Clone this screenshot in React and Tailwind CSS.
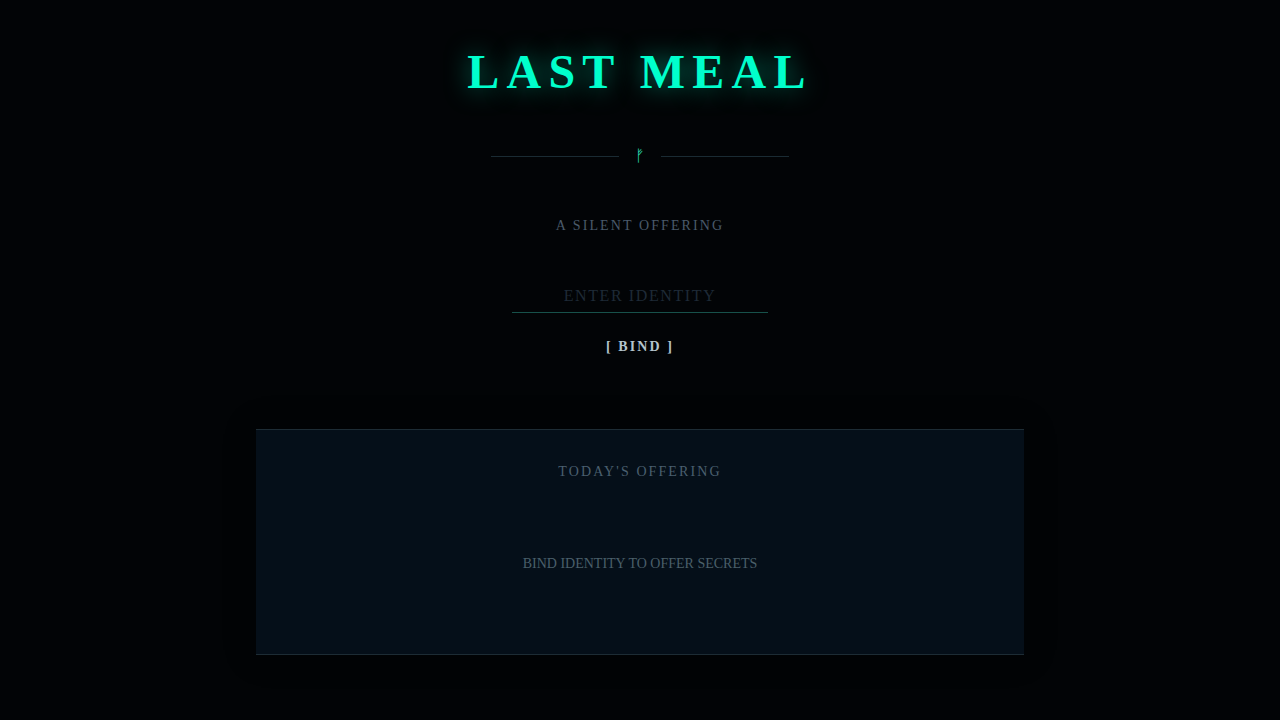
import React, { useState } from "react";

const Divider = () => (
  <div className="mt-12 flex items-center justify-center gap-4">
    <span className="h-px w-32 bg-[#1a2b33]" />
    <span className="text-base text-[#30e8c0]">ᚠ</span>
    <span className="h-px w-32 bg-[#1a2b33]" />
  </div>
);

const App = () => {
  const [identity, setIdentity] = useState("");

  return (
    <div className="min-h-screen bg-[#020406] px-4 py-12 font-['Liberation_Serif',serif]">
      <main className="mx-auto flex max-w-3xl flex-col text-center">
        <h1 className="text-5xl font-bold tracking-[0.15em] text-[#00ffcc] [text-shadow:0_0_25px_rgba(0,255,204,0.5)]">
          LAST MEAL
        </h1>
        <Divider />
        <p className="mt-12 text-sm tracking-[0.15em] text-[#4a5a6a]">
          A SILENT OFFERING
        </p>

        <form
          className="mt-11 flex flex-col items-center gap-6"
          onSubmit={(e) => e.preventDefault()}
        >
          <input
            type="text"
            aria-label="Identity"
            placeholder="ENTER IDENTITY"
            value={identity}
            onChange={(e) => setIdentity(e.target.value)}
            className="w-64 border-b border-[#17514a] bg-transparent py-1 text-center text-base tracking-widest text-[#cbd5e1] outline-none placeholder:text-[#1e2a36]"
          />
          <button
            type="submit"
            className="text-sm font-bold tracking-[0.15em] text-[#b4c4cc] hover:text-[#00ffcc]"
          >
            [ BIND ]
          </button>
        </form>

        <section className="mt-18 border-y border-[#1d2c35] bg-[#050f19] px-8 pt-8 pb-20 shadow-[0_0_30px_rgba(0,0,0,0.3)]">
          <h2 className="text-sm tracking-[0.15em] text-[#4a5f6f]">
            TODAY'S OFFERING
          </h2>
          <p className="mt-18 text-sm text-[#4a5f6a]">
            BIND IDENTITY TO OFFER SECRETS
          </p>
        </section>
      </main>
    </div>
  );
};

export default App;
